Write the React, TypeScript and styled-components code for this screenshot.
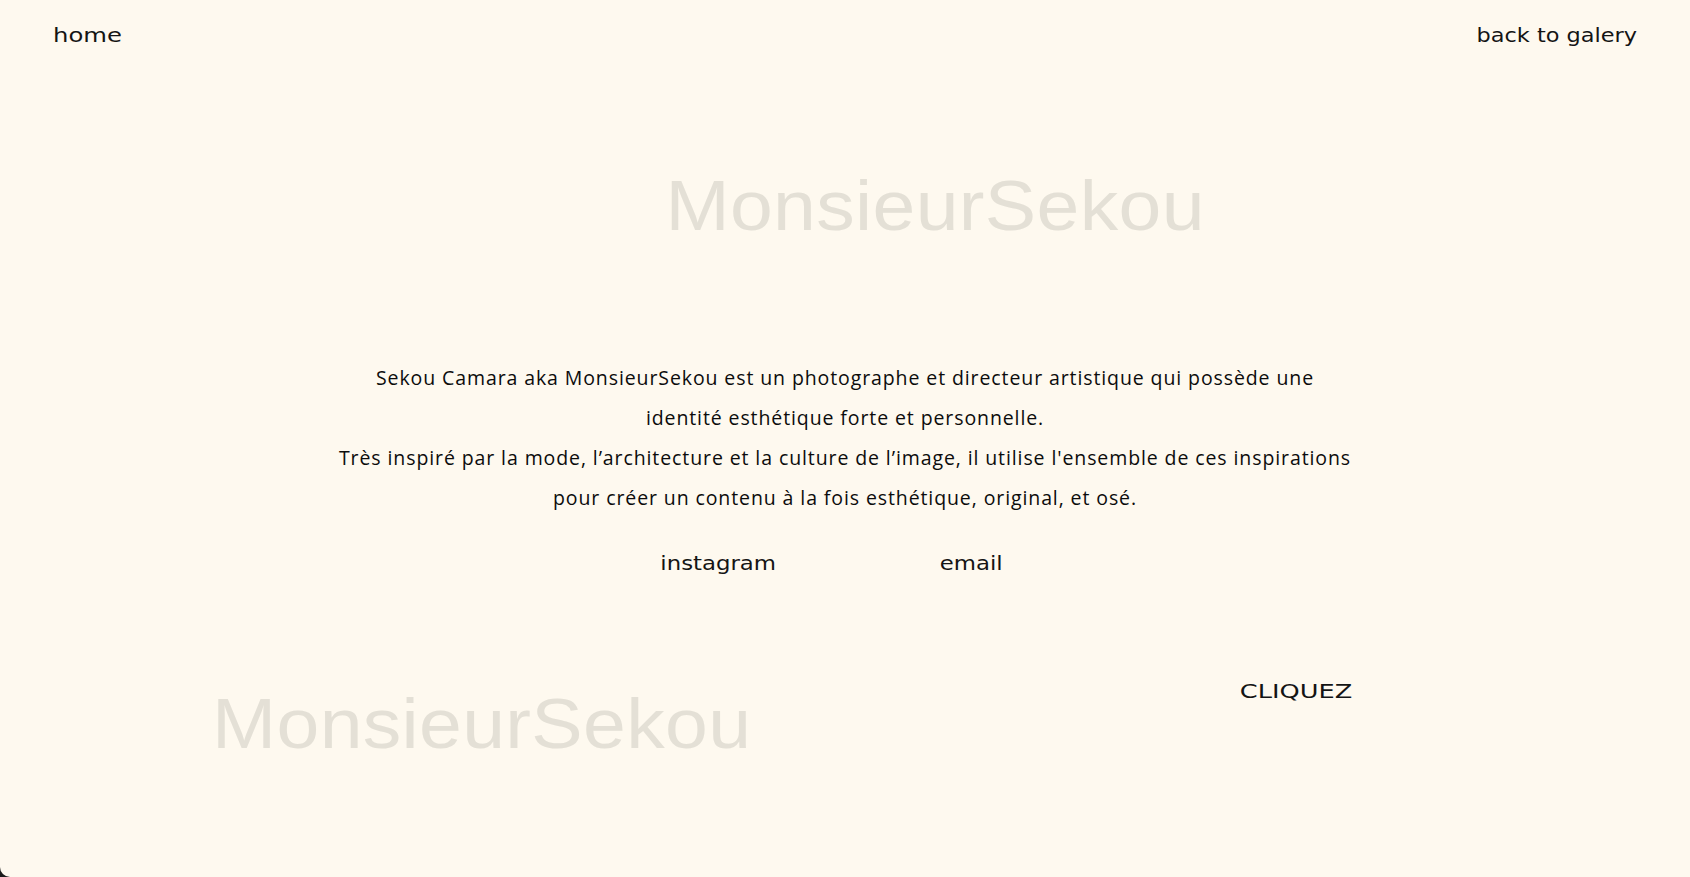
import * as React from 'react';
import styled, { createGlobalStyle } from 'styled-components';

const GlobalStyle = createGlobalStyle`
  html, body {
    margin: 0;
    padding: 0;
    background: #1b1b1b;
  }
  * {
    box-sizing: border-box;
  }
`;

const Page = styled.div`
  width: 100vw;
  height: 100vh;
  background: #fef9ef;
  border-bottom-left-radius: 10px;
  overflow: hidden;
  display: flex;
  flex-direction: column;
  color: #141414;
`;

const Header = styled.header`
  display: flex;
  justify-content: space-between;
  padding: 26px 53px 0 53px;
`;

// extended grotesque look: DejaVu stretched horizontally
const Wide = styled.a<{ $origin?: string; $sx?: number }>`
  display: inline-block;
  font-family: 'DejaVu Sans', sans-serif;
  font-size: 19px;
  line-height: 19px;
  color: #141414;
  text-decoration: none;
  transform: scaleX(${(p) => p.$sx || 1.26});
  transform-origin: ${(p) => p.$origin || 'left'};
  cursor: pointer;
`;

const Brand = styled.h1<{ $origin?: string }>`
  margin: 0;
  font-family: 'Liberation Sans', Arial, sans-serif;
  font-weight: 400;
  font-size: 70px;
  line-height: 70px;
  letter-spacing: 0.3px;
  color: #e4e0d6;
  white-space: nowrap;
  transform: scaleX(1.1);
  transform-origin: ${(p) => p.$origin || 'center'};
`;

const HeroTitle = styled.div`
  display: flex;
  justify-content: center;
  padding-left: 180px;
  margin-top: 126px;
`;

const About = styled.p`
  margin: 117px 0 0 0;
  text-align: center;
  font-family: 'Open Sans', Lato, sans-serif;
  font-size: 19.5px;
  line-height: 40px;
  letter-spacing: 0.9px;
  color: #0c0c0c;
`;

const Links = styled.nav`
  display: grid;
  grid-template-columns: 253px 253px;
  justify-content: center;
  justify-items: center;
  margin-top: 36px;
`;

const Footer = styled.div`
  display: flex;
  justify-content: space-between;
  align-items: flex-start;
  padding: 0 338px 0 212px;
  margin-top: 109px;
`;

const FooterBrand = styled(Brand)`
  margin-top: 7px;
`;

export default function App() {
  return (
    <>
      <GlobalStyle />
      <Page>
        <Header>
          <Wide $sx={1.28}>home</Wide>
          <Wide $origin="right" $sx={1.18}>back to galery</Wide>
        </Header>

        <HeroTitle>
          <Brand>MonsieurSekou</Brand>
        </HeroTitle>

        <About>
          Sekou Camara aka MonsieurSekou est un photographe et directeur artistique qui possède une
          <br />
          identité esthétique forte et personnelle.
          <br />
          Très inspiré par la mode, l’architecture et la culture de l’image, il utilise l'ensemble de ces inspirations
          <br />
          pour créer un contenu à la fois esthétique, original, et osé.
        </About>

        <Links>
          <Wide $origin="center" $sx={1.2}>instagram</Wide>
          <Wide $origin="center" $sx={1.2}>email</Wide>
        </Links>

        <Footer>
          <FooterBrand $origin="left">MonsieurSekou</FooterBrand>
          <Wide $origin="right" $sx={1.35}>CLIQUEZ</Wide>
        </Footer>
      </Page>
    </>
  );
}
